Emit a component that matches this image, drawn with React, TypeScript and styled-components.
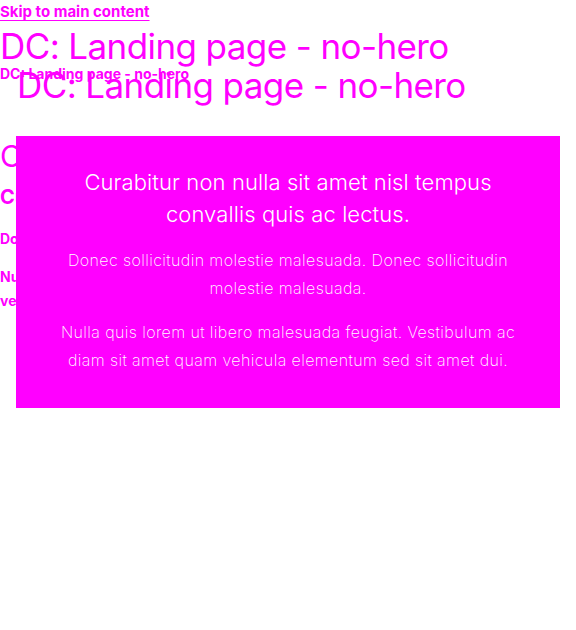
import React from "react";
import styled, { createGlobalStyle } from "styled-components";

const MAGENTA = "#ff00ff";

const GlobalStyle = createGlobalStyle`
  html, body { margin: 0; padding: 0; background: #ffffff; }
  body {
    font-family: Inter, "Liberation Sans", Arial, sans-serif;
    color: ${MAGENTA};
  }
  * { box-sizing: border-box; }
`;

const Page = styled.div`
  display: flex;
  flex-direction: column;
  width: 576px;
`;

const SkipLink = styled.a`
  align-self: flex-start;
  color: ${MAGENTA};
  font-size: 15px;
  font-weight: 700;
  line-height: 24px;
  text-decoration: underline;
  text-underline-offset: 3px;
`;

const Title = styled.h1`
  margin: 0;
  font-size: 35px;
  font-weight: 400;
  line-height: 44px;
  letter-spacing: -0.6px;
  color: ${MAGENTA};
  white-space: nowrap;
`;

const Header = styled.header`
  position: relative;
  height: 112px;
`;

const Crumb = styled.div`
  margin-top: -4px;
  font-size: 14px;
  font-weight: 700;
  line-height: 20px;
  color: ${MAGENTA};
`;

const OverTitle = styled(Title)`
  position: absolute;
  left: 17px;
  top: 39px;
`;

const Main = styled.main`
  display: grid;
  grid-template-columns: 1fr;
  align-items: start;
`;

const Content = styled.div`
  grid-area: 1 / 1;
  display: flex;
  flex-direction: column;
`;

const ContentTitle = styled.h2`
  margin: 0;
  font-size: 30px;
  font-weight: 400;
  line-height: 40px;
  color: ${MAGENTA};
  white-space: nowrap;
`;

const ContentSub = styled.h3`
  margin: 0;
  padding-top: 3px;
  font-size: 20px;
  font-weight: 700;
  line-height: 36px;
  color: ${MAGENTA};
  white-space: nowrap;
`;

const ContentText = styled.p<{ $space: number }>`
  margin: ${(p) => p.$space}px 0 0;
  font-size: 14px;
  font-weight: 700;
  line-height: 24px;
  color: ${MAGENTA};
`;

const Overlay = styled.section`
  grid-area: 1 / 1;
  z-index: 1;
  margin: 0 16px;
  background: ${MAGENTA};
  color: #ffffff;
  padding: 30px 40px 34px;
  display: flex;
  flex-direction: column;
  align-items: center;
  text-align: center;
`;

const OverlayTitle = styled.h2`
  margin: 0;
  font-size: 22px;
  font-weight: 300;
  line-height: 32px;
  letter-spacing: 0.1px;
  color: #ffffff;
`;

const OverlayText = styled.p`
  margin: 16px 0 0;
  font-size: 16px;
  font-weight: 200;
  line-height: 28px;
  letter-spacing: 0.4px;
  color: #ffffff;
`;

export default function App() {
  return (
    <>
      <GlobalStyle />
      <Page>
        <SkipLink href="#main">Skip to main content</SkipLink>
        <Header>
          <Title>DC: Landing page - no-hero</Title>
          <Crumb>DC: Landing page - no-hero</Crumb>
          <OverTitle>DC: Landing page - no-hero</OverTitle>
        </Header>
        <Main id="main">
          <Content>
            <ContentTitle>Curabitur non nulla sit amet nisl tempus</ContentTitle>
            <ContentSub>Curabitur non nulla sit amet</ContentSub>
            <ContentText $space={12}>Donec sollicitudin molestie malesuada.</ContentText>
            <ContentText $space={14}>
              Nulla quis lorem ut libero malesuada feugiat. Vestibulum ac diam sit amet quam
              vehicula elementum sed sit amet dui.
            </ContentText>
          </Content>
          <Overlay>
            <OverlayTitle>
              Curabitur non nulla sit amet nisl tempus convallis quis ac lectus.
            </OverlayTitle>
            <OverlayText>
              Donec sollicitudin molestie malesuada. Donec sollicitudin molestie malesuada.
            </OverlayText>
            <OverlayText>
              Nulla quis lorem ut libero malesuada feugiat. Vestibulum ac diam sit amet quam
              vehicula elementum sed sit amet dui.
            </OverlayText>
          </Overlay>
        </Main>
      </Page>
    </>
  );
}
